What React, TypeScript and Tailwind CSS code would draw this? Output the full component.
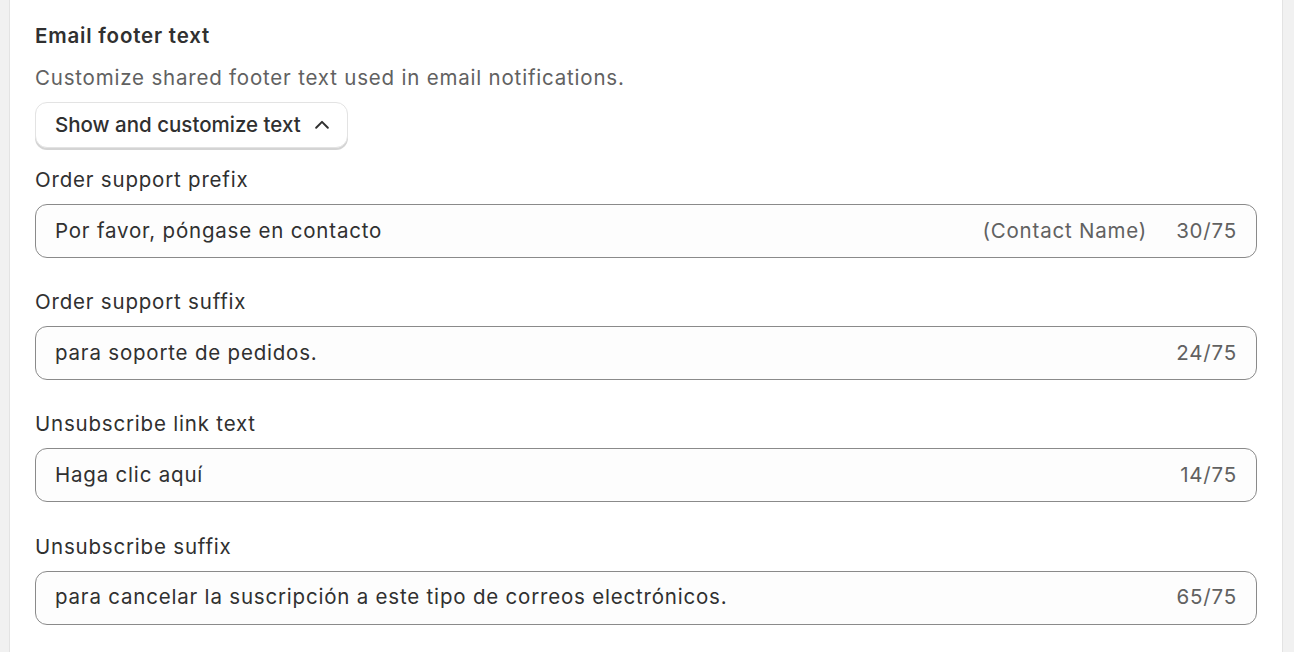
import React from "react";

type Field = { label: string; value: string; suffix?: string; count: string };

const fields: Field[] = [
  { label: "Order support prefix", value: "Por favor, póngase en contacto", suffix: "(Contact Name)", count: "30/75" },
  { label: "Order support suffix", value: "para soporte de pedidos.", count: "24/75" },
  { label: "Unsubscribe link text", value: "Haga clic aquí", count: "14/75" },
  { label: "Unsubscribe suffix", value: "para cancelar la suscripción a este tipo de correos electrónicos.", count: "65/75" },
];

export default function App() {
  return (
    <div
      className="flex w-[1294px] h-[652px] overflow-hidden bg-[#f1f1f1] text-[#303030]"
      style={{ fontFamily: "Inter, 'Noto Sans', sans-serif" }}
    >
      <div className="w-[9px] shrink-0 bg-[#f1f1f1]" />
      <div className="w-[1274px] shrink-0 bg-white border-l border-r border-[#e3e3e3] px-[25px] pt-[21px] tracking-[0.8px]">
        <h2 className="text-[20.5px] leading-[30px] font-semibold tracking-[0.8px] text-[#303030]">Email footer text</h2>
        <p className="mt-[12px] text-[20.5px] leading-[30px] text-[#616161]">
          Customize shared footer text used in email notifications.
        </p>
        <button className="mt-[9px] flex items-center h-[46px] w-[313px] pl-[19px] rounded-[12px] bg-white border border-[#e3e3e3] text-[20.5px] font-medium tracking-[0px] text-[#303030] shadow-[0_2px_0_0_#d4d4d4]">
          <span>Show and customize text</span>
          <svg className="ml-[12px]" width="18" height="18" viewBox="0 0 20 20" fill="none">
            <path d="M3.5 13 10 6.5l6.5 6.5" stroke="#303030" strokeWidth="2.2" strokeLinecap="round" strokeLinejoin="round" />
          </svg>
        </button>
        <div className="mt-[17px] flex flex-col gap-[29.2px]">
          {fields.map((f) => (
            <div key={f.label} className="flex flex-col">
              <label className="text-[20.5px] leading-[30px] text-[#303030]">{f.label}</label>
              <div className="mt-[9px] flex items-center h-[54px] rounded-[12px] border border-[#8a8a8a] bg-[#fdfdfd] pl-[19px] pr-[19px] text-[20.5px]">
                <span className="flex-1 text-[#303030] whitespace-nowrap">{f.value}</span>
                {f.suffix && <span className="text-[#616161] mr-[29px]">{f.suffix}</span>}
                <span className="text-[#616161]">{f.count}</span>
              </div>
            </div>
          ))}
        </div>
      </div>
      <div className="flex-1 bg-[#f1f1f1]" />
    </div>
  );
}
